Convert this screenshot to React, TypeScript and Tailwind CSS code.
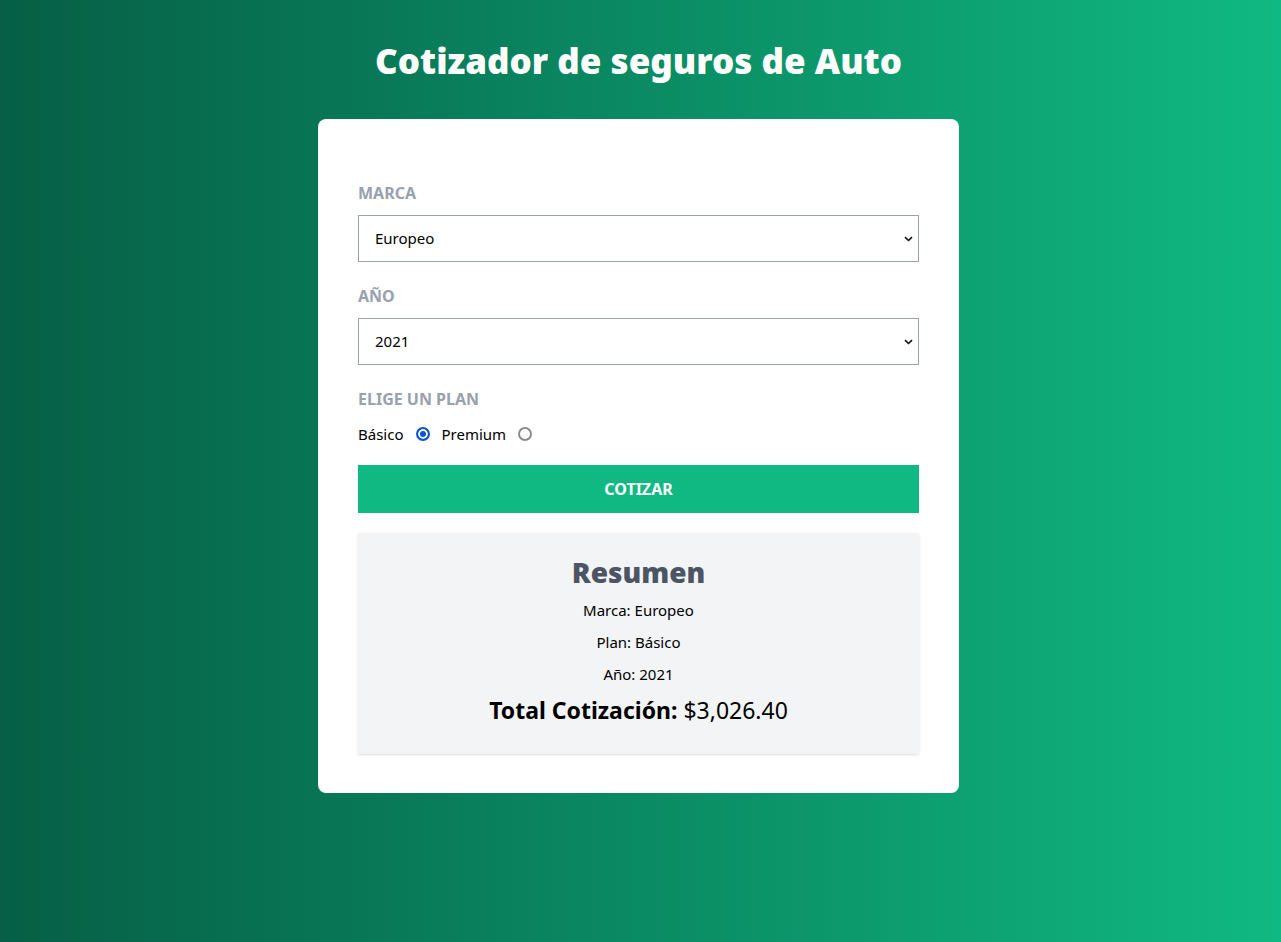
import { useState } from "react";

const marcas = [
  { id: 1, nombre: "Europeo" },
  { id: 2, nombre: "Americano" },
  { id: 3, nombre: "Asiático" },
];

const years = Array.from({ length: 20 }, (_, i) => 2021 - i);

const radioClass =
  "appearance-none w-[14px] h-[14px] rounded-full border-2 border-[#8a8a90] bg-white checked:border-[#0b57d0] checked:bg-[#0b57d0] checked:shadow-[inset_0_0_0_2px_white]";

const Chevron = () => (
  <svg
    className="absolute right-[6px] top-1/2 -translate-y-1/2 pointer-events-none"
    width="9"
    height="6"
    viewBox="0 0 9 6"
    fill="none"
  >
    <path d="M1 1.2 L4.5 4.5 L8 1.2" stroke="#111" strokeWidth="1.6" />
  </svg>
);

const App = () => {
  const [marca, setMarca] = useState("1");
  const [year, setYear] = useState("2021");
  const [plan, setPlan] = useState("1");

  return (
    <div
      className="min-h-screen bg-gradient-to-r from-[#065f46] to-[#10b981] pr-1"
      style={{ fontFamily: '"Noto Sans", "Open Sans", sans-serif' }}
    >
      <header className="pt-[35px] pb-[32px]">
        <h1 className="text-white text-center text-[35px] leading-[52px] font-black">
          Cotizador de seguros de Auto
        </h1>
      </header>

      <main className="mx-auto w-[641px] bg-white rounded-lg px-10 pt-[64px] pb-[39px]">
        <form onSubmit={(e) => e.preventDefault()}>
          <div>
            <label className="block text-[16px] leading-5 font-bold text-gray-400 uppercase mb-[12px]">
              Marca
            </label>
            <div className="relative">
              <select
                value={marca}
                onChange={(e) => setMarca(e.target.value)}
                className="appearance-none w-full h-[47px] bg-white border border-[#9ca3af] px-4 text-[15px] text-black"
              >
                {marcas.map((m) => (
                  <option key={m.id} value={m.id}>
                    {m.nombre}
                  </option>
                ))}
              </select>
              <Chevron />
            </div>
          </div>

          <div className="mt-[24px]">
            <label className="block text-[16px] leading-5 font-bold text-gray-400 uppercase mb-[12px]">
              Año
            </label>
            <div className="relative">
              <select
                value={year}
                onChange={(e) => setYear(e.target.value)}
                className="appearance-none w-full h-[47px] bg-white border border-[#9ca3af] px-4 text-[15px] text-black"
              >
                {years.map((y) => (
                  <option key={y} value={y}>
                    {y}
                  </option>
                ))}
              </select>
              <Chevron />
            </div>
          </div>

          <div className="mt-[24px]">
            <label className="block text-[16px] leading-5 font-bold text-gray-400 uppercase mb-[14px]">
              Elige un plan
            </label>
            <div className="flex items-center gap-3 text-[15px] text-black">
              <label className="flex items-center gap-3">
                Básico
                <input
                  type="radio"
                  name="plan"
                  value="1"
                  checked={plan === "1"}
                  onChange={(e) => setPlan(e.target.value)}
                  className={radioClass}
                />
              </label>
              <label className="flex items-center gap-3">
                Premium
                <input
                  type="radio"
                  name="plan"
                  value="2"
                  checked={plan === "2"}
                  onChange={(e) => setPlan(e.target.value)}
                  className={radioClass}
                />
              </label>
            </div>
          </div>

          <button
            type="submit"
            className="mt-[19px] w-full h-[48px] bg-[#10b981] text-white text-[16px] font-bold uppercase"
          >
            Cotizar
          </button>
        </form>

        <div className="mt-5 bg-gray-100 shadow text-center pt-[22px] pb-[28px]">
          <h2 className="text-[#4b5563] text-[28px] leading-[34px] font-black">
            Resumen
          </h2>
          <p className="mt-[11px] text-[15px] leading-5 text-black">Marca: Europeo</p>
          <p className="mt-3 text-[15px] leading-5 text-black">Plan: Básico</p>
          <p className="mt-3 text-[15px] leading-5 text-black">Año: 2021</p>
          <p className="mt-[10px] text-[23px] leading-8 text-black">
            <span className="font-bold">Total Cotización: </span>$3,026.40
          </p>
        </div>
      </main>
    </div>
  );
};

export default App;
